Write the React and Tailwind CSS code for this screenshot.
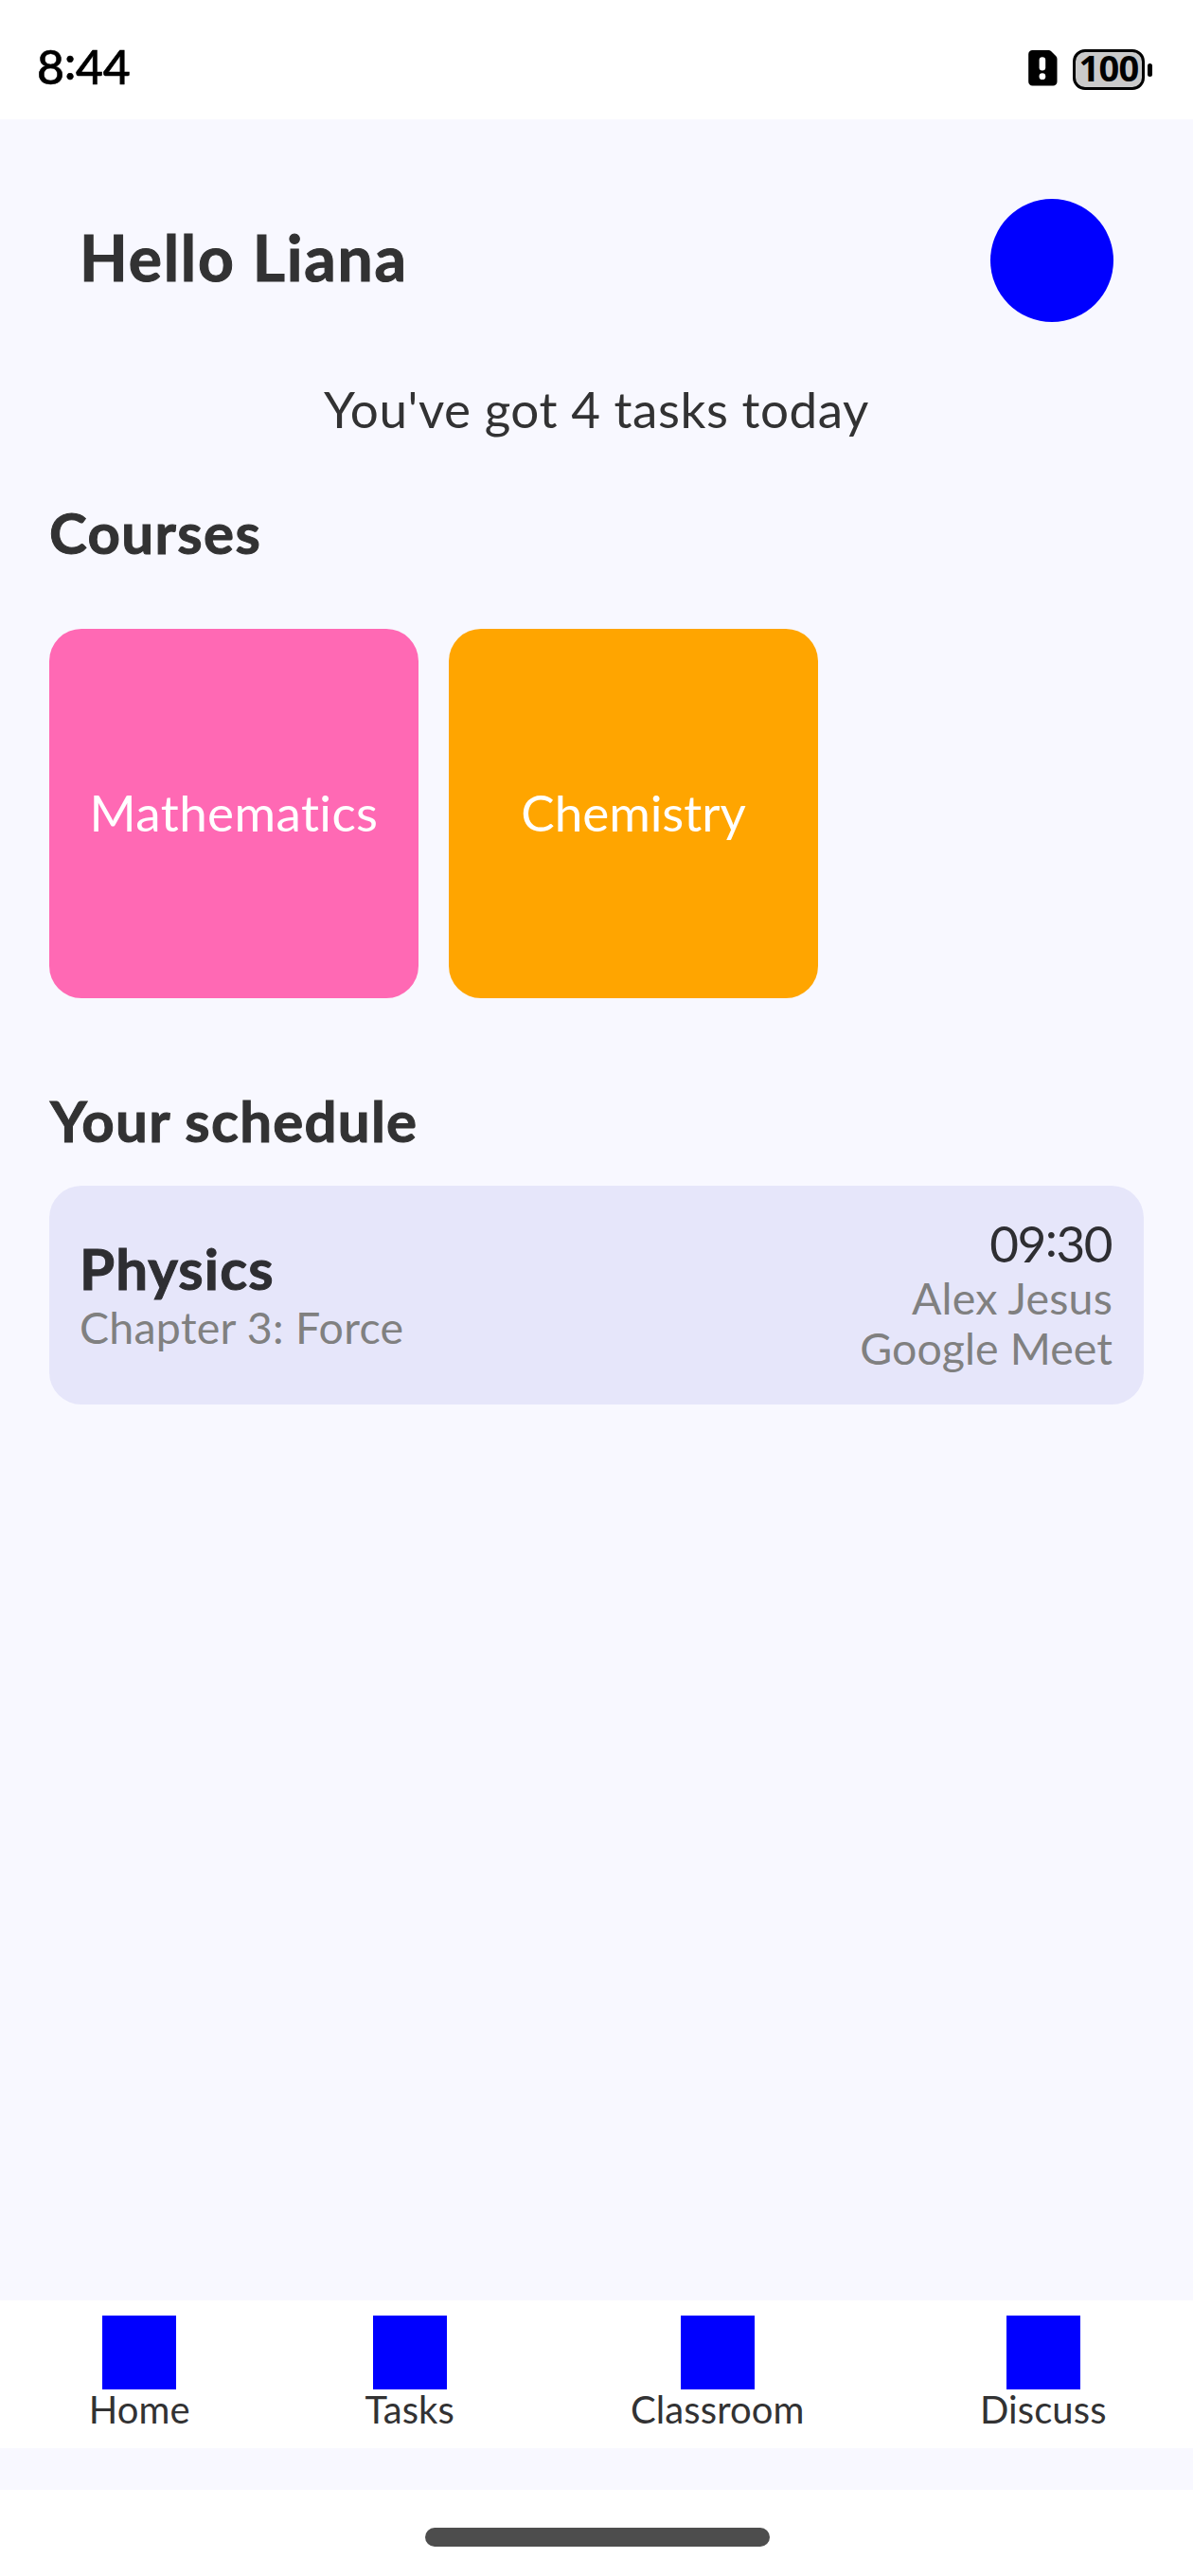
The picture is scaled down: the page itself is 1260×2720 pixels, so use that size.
const courses = [
  { name: "Mathematics", color: "bg-[#ff69b4]", text: "tracking-[0.4px]" },
  { name: "Chemistry", color: "bg-[#ffa500]", text: "tracking-[-0.06px]" },
];

const tabs = [
  { name: "Home", box: "w-[112px]" },
  { name: "Tasks", box: "w-[94px]" },
  { name: "Classroom", box: "w-[191px]" },
  { name: "Discuss", box: "w-[132px]" },
];

function Colon({ className }) {
  return <span className={"inline-block " + className}>:</span>;
}

function SimAlertIcon() {
  return (
    <svg width="31" height="38" viewBox="0 0 31 38" fill="none">
      <path d="M4.5 0H21.3c1.2 0 2.2.4 3 1.2l5 5c.8.8 1.2 1.8 1.2 3V33.2c0 2.5-1.8 4.3-4.3 4.3H4.5C2 37.5.2 35.7.2 33.2V4.3C.2 1.8 2 0 4.5 0Z" fill="#000" />
      <rect x="11.6" y="7.3" width="6.6" height="14.3" rx="3.3" fill="#fff" />
      <circle cx="14.9" cy="27.7" r="3.4" fill="#fff" />
    </svg>
  );
}

function Battery() {
  return (
    <div className="flex items-center gap-[3px]">
      <div className="flex h-[43px] w-[76px] items-start justify-center rounded-[13px] border-[3px] border-black bg-[#cacaca] font-['Noto_Sans',sans-serif] text-[38px] font-bold leading-[32px] tracking-[-0.74px]">
        <span>100</span>
      </div>
      <div className="h-[14px] w-[5px] rounded-[2.5px] bg-black" />
    </div>
  );
}

function StatusBar() {
  return (
    <div className="flex h-[126px] items-start justify-between bg-white pl-[39px] pr-[43px] text-black">
      <div className="mt-10 text-[50px] font-medium leading-[60px] tracking-[-0.3px] [-webkit-text-stroke:0.6px_currentColor]">
        8<Colon className="-translate-y-[5px]" />44
      </div>
      <div className="mt-[52px] flex gap-4">
        <div className="pt-px"><SimAlertIcon /></div>
        <Battery />
      </div>
    </div>
  );
}

export default function App() {
  return (
    <div className="flex h-[2720px] w-[1260px] flex-col overflow-hidden bg-[#f8f8ff] font-['Lato',sans-serif] text-[#323233]">
      <StatusBar />

      <main className="flex flex-1 flex-col px-[52px]">
        <header className="flex items-start justify-between px-8 pt-[84px]">
          <h1 className="mt-[22px] text-[66px] font-bold leading-[80px] tracking-[1.8px] [-webkit-text-stroke:1px_currentColor]">Hello Liana</h1>
          <div className="size-[130px] rounded-full bg-[#0000ff]" />
        </header>

        <p className="mt-[60px] text-center text-[53px] leading-[64px] tracking-[0.55px]">You've got 4 tasks today</p>

        <h2 className="mt-[62px] text-[60px] font-bold leading-[72px] tracking-[1.4px] [-webkit-text-stroke:1px_currentColor]">Courses</h2>
        <div className="mt-[66px] flex gap-8">
          {courses.map((c) => (
            <div key={c.name} className={"flex size-[390px] items-center justify-center rounded-[34px] pb-[3px] text-[53px] leading-[64px] text-white " + c.color}>
              <span className={c.text}>{c.name}</span>
            </div>
          ))}
        </div>

        <h2 className="mt-[93px] pl-px text-[60px] font-bold leading-[72px] tracking-[1.25px] [-webkit-text-stroke:1px_currentColor]">Your schedule</h2>
        <div className="mt-[33px] flex h-[231px] justify-between rounded-[34px] bg-[#e6e6fa] px-8 text-[#2e2e32]">
          <div className="pt-[52px]">
            <div className="text-[60px] font-bold leading-[70px] tracking-[1.1px] [-webkit-text-stroke:1px_currentColor]">Physics</div>
            <div className="text-[46.5px] leading-[54px] tracking-[0.25px] text-[#808080]">Chapter 3: Force</div>
          </div>
          <div className="pr-px pt-[30px] text-right">
            <div className="pr-px text-[53px] leading-[62px] tracking-[-1.5px]">
              09<Colon className="-translate-y-1.5" />30
            </div>
            <div className="text-[46.5px] leading-[52px] tracking-[0.21px] text-[#808080]">Alex Jesus</div>
            <div className="text-[46.5px] leading-[54px] tracking-[0.07px] text-[#808080]">Google Meet</div>
          </div>
        </div>
      </main>

      <nav className="flex h-[156px] justify-around bg-white pr-px pt-4">
        {tabs.map((t) => (
          <div key={t.name} className={"flex flex-col items-center " + t.box}>
            <div className="size-[78px] bg-[#0000ff]" />
            <span className="whitespace-nowrap text-[40px] leading-[43px] tracking-[0.1px]">{t.name}</span>
          </div>
        ))}
      </nav>

      <div className="mt-11 flex h-[91px] justify-center bg-white pl-px">
        <div className="mt-[39.5px] h-5 w-[364px] rounded-full bg-[#4d4d4d]" />
      </div>
    </div>
  );
}
